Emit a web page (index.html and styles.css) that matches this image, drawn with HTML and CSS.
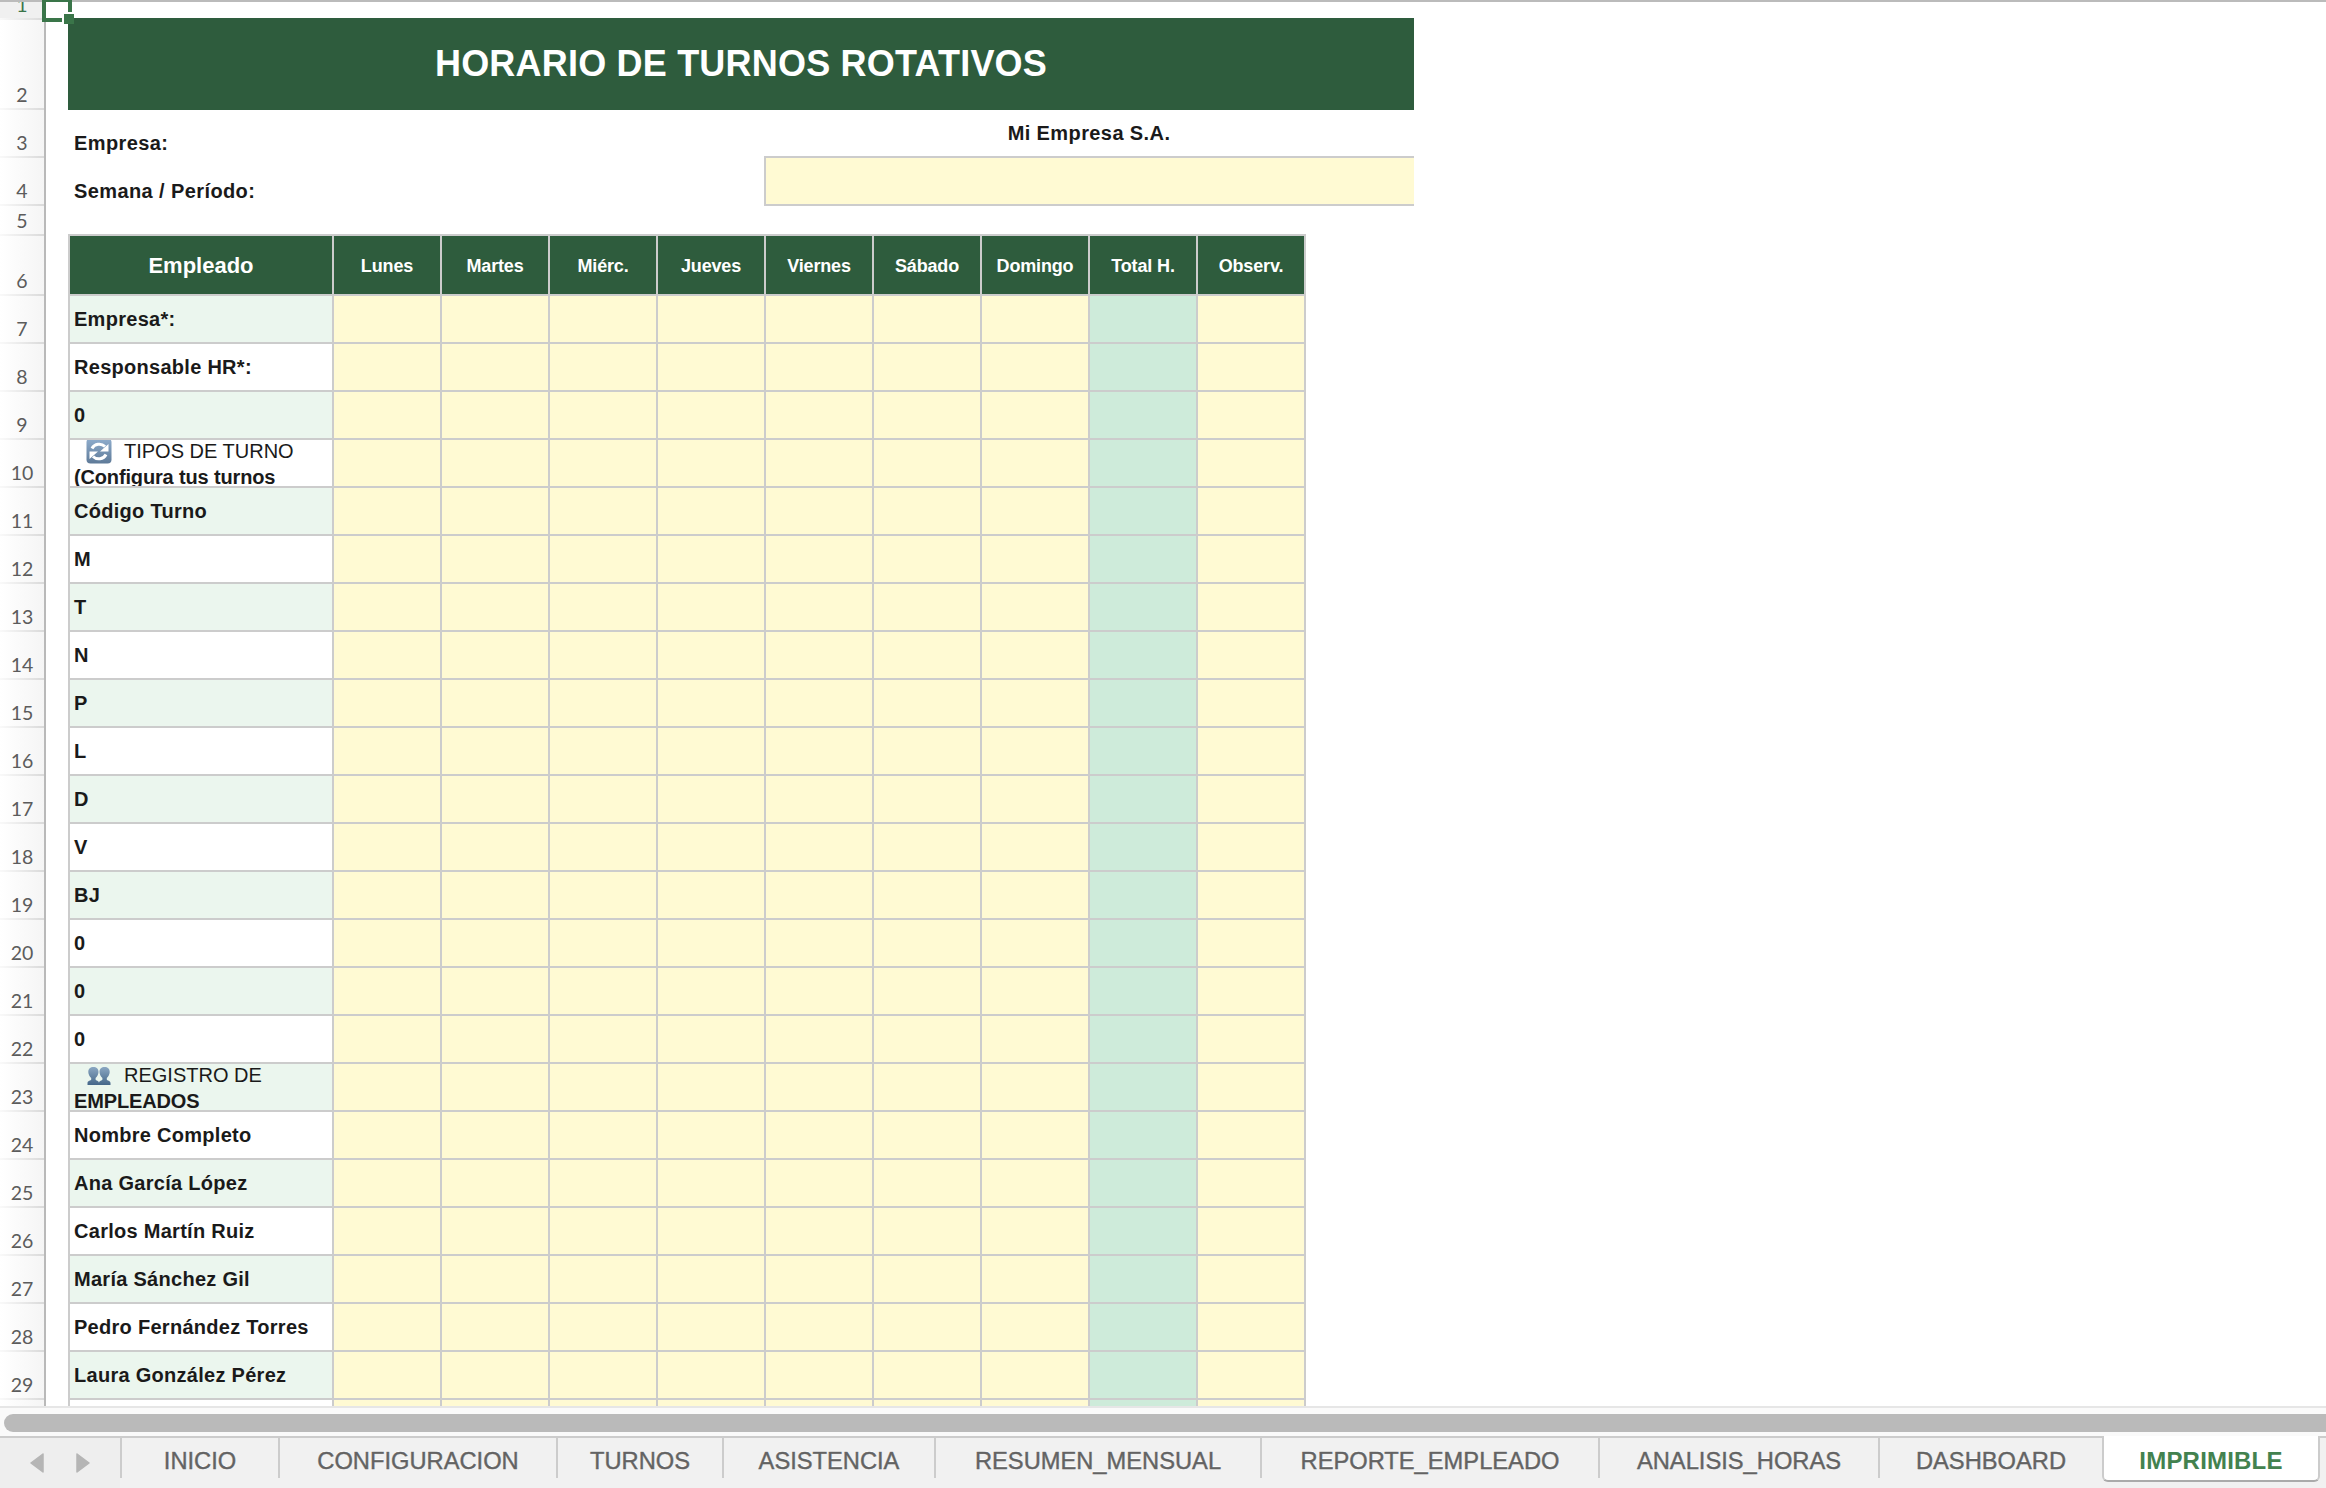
FILE: index.html
```html
<!DOCTYPE html>
<html lang="es">
  <head>
    <meta charset="UTF-8" />
    <meta name="viewport" content="width=device-width, initial-scale=1.0" />
    <title>Horario de Turnos Rotativos</title>
    <link rel="stylesheet" href="styles.css">
  </head>
  <body>
    <!-- Sheet -->
    <div class="sheet">
      <div class="row-headers" id="rowHeaders">
        <div class="row-number row-1 selected">1</div>
        <div class="row-number row-2">2</div>
        <div class="row-number">3</div>
        <div class="row-number">4</div>
        <div class="row-number row-5">5</div>
        <div class="row-number row-6">6</div>
      </div>

      <div class="content">
        <h1 class="title">HORARIO DE TURNOS ROTATIVOS</h1>
        <div class="info-row">
          <div class="info-label">Empresa:</div>
          <div class="info-value">Mi Empresa S.A.</div>
        </div>
        <div class="info-row">
          <div class="info-label">Semana / Período:</div>
          <div class="info-value info-input"></div>
        </div>

        <div class="schedule" id="schedule">
          <div class="cell head head-name">Empleado</div>
          <div class="cell head">Lunes</div>
          <div class="cell head">Martes</div>
          <div class="cell head">Miérc.</div>
          <div class="cell head">Jueves</div>
          <div class="cell head">Viernes</div>
          <div class="cell head">Sábado</div>
          <div class="cell head">Domingo</div>
          <div class="cell head">Total H.</div>
          <div class="cell head">Observ.</div>
        </div>
      </div>
    </div>

    <div class="cursor"><span class="cursor-handle"></span></div>

    <!-- Scrollbar -->
    <div class="scrollbar"><div class="scroll-thumb"></div></div>

    <!-- Sheet tabs -->
    <div class="tab-bar">
      <div class="tab-arrows">
        <svg width="14" height="20" viewBox="0 0 14 20"><path d="M13 1v18L1 10z" /></svg>
        <svg width="14" height="20" viewBox="0 0 14 20"><path d="M1 1v18L13 10z" /></svg>
      </div>
      <div class="tab tab-inicio">INICIO</div>
      <div class="tab tab-config">CONFIGURACION</div>
      <div class="tab tab-turnos">TURNOS</div>
      <div class="tab tab-asistencia">ASISTENCIA</div>
      <div class="tab tab-resumen">RESUMEN_MENSUAL</div>
      <div class="tab tab-reporte">REPORTE_EMPLEADO</div>
      <div class="tab tab-analisis">ANALISIS_HORAS</div>
      <div class="tab tab-dashboard">DASHBOARD</div>
      <div class="tab tab-active">IMPRIMIBLE</div>
    </div>

    <template id="iconShift">
      <svg class="icon" width="26" height="26" viewBox="0 0 26 26">
        <defs>
          <linearGradient id="shiftBg" x1="0" y1="0" x2="0" y2="1">
            <stop offset="0" stop-color="#8fadcd" />
            <stop offset="1" stop-color="#5e7a98" />
          </linearGradient>
        </defs>
        <rect x="0.5" y="0.5" width="25" height="25" rx="4" fill="url(#shiftBg)" />
        <path d="M6 10.5A8 7.500 0 0 1 19 8.500M20 16.500A8 7.500 0 0 1 7 18.500" fill="none" stroke="#fff" stroke-width="3" />
        <path d="M22.500 6V13.500H14zM3.500 21V13.500H12z" fill="#fff" />
      </svg>
    </template>

    <template id="iconPeople">
      <svg class="icon" width="26" height="26" viewBox="0 0 26 26">
        <defs>
          <linearGradient id="peopleBg" x1="0" y1="0" x2="0" y2="1">
            <stop offset="0" stop-color="#8ba7c2" />
            <stop offset="1" stop-color="#456789" />
          </linearGradient>
        </defs>
        <path d="M1.500 23V21C1.500 18.500 5 18.800 5.200 17.500V16C3.500 14.500 2.300 12 2.300 10C2.300 6.500 4.300 5 7.400 5S12.500 6.500 12.500 10C12.500 12 11.300 14.500 9.600 16V17.500C9.800 18.800 13 18.500 13 21V23z" fill="url(#peopleBg)" />
        <path d="M13 23V21C13 18.500 16.200 18.800 16.400 17.500V16C14.700 14.500 13.500 12 13.500 10C13.500 6.500 15.500 5 18.600 5S23.700 6.500 23.700 10C23.700 12 22.500 14.500 20.800 16V17.500C21 18.800 24.500 18.500 24.500 21V23z" fill="url(#peopleBg)" />
      </svg>
    </template>

    <script>
      const firstRow = 7;
      const names = [
        "Empresa*:",
        "Responsable HR*:",
        "0",
        { icon: "iconShift", title: "TIPOS DE TURNO", text: "(Configura tus turnos" },
        "Código Turno",
        "M",
        "T",
        "N",
        "P",
        "L",
        "D",
        "V",
        "BJ",
        "0",
        "0",
        "0",
        { icon: "iconPeople", title: "REGISTRO DE", text: "EMPLEADOS" },
        "Nombre Completo",
        "Ana García López",
        "Carlos Martín Ruiz",
        "María Sánchez Gil",
        "Pedro Fernández Torres",
        "Laura González Pérez",
        "",
      ];

      const schedule = document.getElementById("schedule");
      const rowHeaders = document.getElementById("rowHeaders");

      function addCell(className) {
        const cell = document.createElement("div");
        cell.className = "cell " + className;
        schedule.appendChild(cell);
        return cell;
      }

      names.forEach((name, index) => {
        const number = document.createElement("div");
        number.className = "row-number";
        number.textContent = name ? firstRow + index : "";
        rowHeaders.appendChild(number);

        const cell = addCell(index % 2 === 0 ? "name striped" : "name");
        if (typeof name === "string") {
          cell.textContent = name;
        } else {
          cell.classList.add("section");
          const icon = document.getElementById(name.icon).innerHTML;
          cell.innerHTML = `
            <div class="section-title">${icon}${name.title}</div>
            <div class="section-text">${name.text}</div>
          `;
        }

        // Monday to Sunday, total hours and notes
        for (let i = 0; i < 9; i++) {
          addCell(i === 7 ? "total" : "input");
        }
      });
    </script>
  </body>
</html>
```

FILE: styles.css
```css
* {
  box-sizing: border-box;
}

body {
  position: relative;
  display: flex;
  flex-direction: column;
  height: 100vh;
  margin: 0;
  overflow: hidden;
  background-color: #fff;
  color: #1a1a1a;
  font-family: "Liberation Sans", Arial, sans-serif;
}

.sheet {
  display: flex;
  height: 1406px;
  flex-shrink: 0;
  overflow: hidden;
  border-top: 2px solid #bbb;
}

/* Row numbers */
.row-headers {
  width: 46px;
  flex-shrink: 0;
  border-right: 2px solid #b9b9b9;
  background: linear-gradient(to right, #fff, #f5f5f5);
}

.row-number {
  display: flex;
  align-items: flex-end;
  justify-content: center;
  height: 48px;
  padding-bottom: 1px;
  border-bottom: 2px solid;
  border-image: linear-gradient(to right, #fafafa, #d9d9d9) 1;
  color: #5c5c5c;
  font-family: Lato, sans-serif;
  font-size: 19.5px;
  line-height: 24px;
}

.row-1 {
  height: 18px;
}

.row-2 {
  height: 90px;
}

.row-5 {
  height: 30px;
}

.row-6 {
  height: 60px;
}

.row-number.selected {
  background-color: #f0f0f0;
  color: #3a7549;
}

.content {
  width: 1346px;
  margin-left: 22px;
  padding-top: 16px;
}

.title {
  display: flex;
  align-items: center;
  justify-content: center;
  height: 92px;
  margin: 0;
  background-color: #2e5c3d;
  color: #fff;
  font-size: 36px;
  font-weight: bold;
  letter-spacing: 0.2px;
}

.info-row {
  display: flex;
  height: 48px;
  font-size: 20px;
  font-weight: bold;
  letter-spacing: 0.4px;
}

.info-label {
  width: 696px;
  padding: 21px 0 0 6px;
  line-height: 24px;
}

.info-value {
  width: 650px;
  line-height: 46px;
  text-align: center;
}

.info-input {
  height: 50px;
  margin-top: -2px;
  border: 2px solid #ccc;
  border-right: none;
  background-color: #fffad3;
}

/* Schedule */
.schedule {
  display: grid;
  grid-template-columns: 264px repeat(9, 108px);
  grid-template-rows: 60px;
  grid-auto-rows: 48px;
  width: 1238px;
  margin-top: 28px;
  border-top: 2px solid #ccc;
  border-left: 2px solid #ccc;
}

.cell {
  overflow: hidden;
  border-right: 2px solid #ccc;
  border-bottom: 2px solid #ccc;
}

.head {
  display: flex;
  align-items: center;
  justify-content: center;
  padding-top: 2px;
  background-color: #2e5c3d;
  color: #fff;
  font-size: 18px;
  font-weight: bold;
  letter-spacing: -0.15px;
}

.head-name {
  font-size: 22px;
  letter-spacing: 0;
}

.name {
  padding-left: 4px;
  font-size: 20px;
  font-weight: bold;
  letter-spacing: 0.28px;
  line-height: 46px;
  white-space: nowrap;
}

.striped {
  background-color: #ebf6ee;
}

.input {
  background-color: #fffad3;
}

.total {
  background-color: #ceebda;
}

.section {
  display: flex;
  flex-direction: column;
  justify-content: center;
  padding-top: 1px;
  letter-spacing: 0;
  line-height: 26px;
}

.section-title {
  display: flex;
  align-items: center;
  height: 26px;
  padding-left: 12px;
  font-weight: normal;
}

.section-text {
  letter-spacing: -0.15px;
}

.icon {
  flex-shrink: 0;
  margin-right: 12px;
}

/* Selected cell */
.cursor {
  position: absolute;
  top: 0;
  left: 42px;
  width: 30px;
  height: 22px;
  border: 4px solid #3a7549;
  border-top-width: 2px;
}

.cursor-handle {
  position: absolute;
  top: 10px;
  left: 16px;
  width: 12px;
  height: 12px;
  border-top: 2px solid #fff;
  border-left: 2px solid #fff;
  background-color: #3a7549;
}

/* Scrollbar */
.scrollbar {
  height: 30px;
  flex-shrink: 0;
  padding: 6px 0 0 4px;
  border-top: 2px solid #e6e6e6;
  background-color: #fafafa;
}

.scroll-thumb {
  height: 18px;
  border-radius: 9px 0 0 9px;
  background-color: #bababa;
}

/* Tabs */
.tab-bar {
  display: flex;
  height: 52px;
  flex-shrink: 0;
  border-top: 2px solid #ccc;
  background-color: #f1f1f1;
}

.tab-arrows {
  display: flex;
  gap: 32px;
  width: 120px;
  padding: 15px 0 0 30px;
  background-color: #eee;
}

.tab-arrows svg {
  fill: #b5b5b5;
  stroke: #b5b5b5;
  stroke-width: 1.5px;
  stroke-linejoin: round;
}

.tab {
  height: 40px;
  border-left: 2px solid #ccc;
  color: #636363;
  font-size: 23.7px;
  line-height: 46px;
  text-align: center;
  text-shadow: 0 -1px 0 #fff;
  -webkit-text-stroke: 0.4px #636363;
}

.tab-inicio {
  width: 158px;
}

.tab-config {
  width: 278px;
}

.tab-turnos {
  width: 166px;
}

.tab-asistencia {
  width: 212px;
}

.tab-resumen {
  width: 326px;
}

.tab-reporte {
  width: 338px;
}

.tab-analisis {
  width: 280px;
}

.tab-dashboard {
  width: 224px;
}

.tab-active {
  width: 218px;
  height: 46px;
  margin-top: -2px;
  border: 2px solid #ccc;
  border-top: none;
  border-bottom-color: #aaa;
  border-radius: 0 0 6px 6px;
  background-color: #fff;
  color: #43824f;
  font-size: 24px;
  font-weight: bold;
  letter-spacing: 0.2px;
  line-height: 50px;
  -webkit-text-stroke: 0;
}
```
